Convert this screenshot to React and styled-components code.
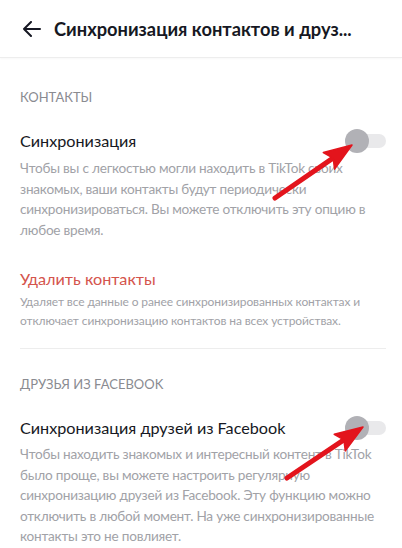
import React from 'react';
import styled, { createGlobalStyle } from 'styled-components';

const GlobalStyle = createGlobalStyle`
  html, body {
    margin: 0;
    padding: 0;
    background: #ffffff;
  }
  body {
    font-family: Lato, "Liberation Sans", sans-serif;
    -webkit-font-smoothing: antialiased;
  }
`;

const Page = styled.div`
  position: relative;
  width: 402px;
  height: 548px;
  overflow: hidden;
  background: #fff;
`;

const Header = styled.header`
  height: 57px;
  display: flex;
  align-items: center;
  padding-left: 22px;
  border-bottom: 1px solid #ededed;
  box-shadow: 0 1px 2px rgba(0, 0, 0, 0.03);
`;

const BackButton = styled.button`
  border: none;
  background: none;
  padding: 0;
  display: flex;
  align-items: center;
  cursor: pointer;
`;

const Title = styled.h1`
  margin: 0 0 0 13px;
  font-size: 18.3px;
  font-weight: 700;
  color: #161823;
  white-space: nowrap;
`;

const Section = styled.section`
  padding: ${p => p.top}px 16px 0 20px;
`;

const SectionLabel = styled.div`
  font-size: 13px;
  line-height: 16px;
  color: #8a8b91;
  text-transform: uppercase;
`;

const Row = styled.div`
  display: flex;
  align-items: center;
  justify-content: space-between;
  margin-top: ${p => p.gap}px;
`;

const ItemTitle = styled.div`
  font-size: 16.2px;
  line-height: 24px;
  color: ${p => (p.danger ? '#d4544c' : '#161823')};
`;

const Description = styled.p`
  margin: ${p => p.gap}px 0 0;
  font-size: ${p => (p.small ? '12px' : '13.6px')};
  line-height: ${p => (p.small ? '19px' : '20.5px')};
  letter-spacing: ${p => (p.small ? '-0.1px' : '-0.22px')};
  color: #a1a2a7;
`;

const Divider = styled.hr`
  border: none;
  border-top: 1px solid #ededed;
  margin: 18px 0 0;
`;

const Track = styled.div`
  position: relative;
  width: 41px;
  height: 24px;
  flex-shrink: 0;

  &::before {
    content: '';
    position: absolute;
    left: 3px;
    right: 0;
    top: 5px;
    height: 14px;
    border-radius: 7px;
    background: #e9e9eb;
  }
`;

const Knob = styled.div`
  position: absolute;
  left: 0;
  top: 0;
  width: 24px;
  height: 24px;
  border-radius: 50%;
  background: #b1b1b6;
`;

const Marker = styled.svg`
  position: absolute;
  left: ${p => p.x}px;
  top: ${p => p.y}px;
  overflow: visible;
  pointer-events: none;
`;

const BackIcon = () => (
  <svg width="19" height="16" viewBox="0 0 19 16" fill="none">
    <path d="M18 8H2M9 1L2 8l7 7" stroke="#161823" strokeWidth="2" strokeLinecap="round" strokeLinejoin="round" />
  </svg>
);

const Toggle = () => (
  <Track>
    <Knob />
  </Track>
);

// red pointer drawn from tail (tx, ty) to tip (hx, hy), page coordinates
const Arrow = ({ tx, ty, hx, hy }) => {
  const dx = hx - tx;
  const dy = hy - ty;
  const len = Math.hypot(dx, dy);
  const ux = dx / len;
  const uy = dy / len;
  const head = 28;
  const half = 10;
  const bx = hx - ux * head;
  const by = hy - uy * head;
  const px = -uy;
  const py = ux;
  const x0 = Math.min(tx, hx) - 12;
  const y0 = Math.min(ty, hy) - 12;
  const pt = (x, y) => `${(x - x0).toFixed(1)},${(y - y0).toFixed(1)}`;
  return (
    <Marker x={x0} y={y0} width={Math.abs(dx) + 24} height={Math.abs(dy) + 24}>
      <line x1={tx - x0} y1={ty - y0} x2={bx + ux * 4 - x0} y2={by + uy * 4 - y0} stroke="#e3141c" strokeWidth="5" strokeLinecap="round" />
      <polygon
        points={`${pt(hx, hy)} ${pt(bx + px * half, by + py * half)} ${pt(bx + ux * 5, by + uy * 5)} ${pt(bx - px * half, by - py * half)}`}
        fill="#e3141c"
        stroke="#e3141c"
        strokeWidth="1.5"
        strokeLinejoin="round"
      />
    </Marker>
  );
};

const App = () => (
  <Page>
    <GlobalStyle />
    <Header>
      <BackButton aria-label="Назад">
        <BackIcon />
      </BackButton>
      <Title>Синхронизация контактов и друз...</Title>
    </Header>

    <Section top={31}>
      <SectionLabel>Контакты</SectionLabel>
      <Row gap={24}>
        <ItemTitle>Синхронизация</ItemTitle>
        <Toggle />
      </Row>
      <Description gap={5}>
        Чтобы вы с легкостью могли находить в TikTok своих знакомых, ваши контакты будут периодически
        синхронизироваться. Вы можете отключить эту опцию в любое время.
      </Description>
      <Row gap={27}>
        <ItemTitle danger>Удалить контакты</ItemTitle>
      </Row>
      <Description gap={1} small>
        Удаляет все данные о ранее синхронизированных контактах и отключает синхронизацию контактов на всех
        устройствах.
      </Description>
      <Divider />
    </Section>

    <Section top={27}>
      <SectionLabel>Друзья из Facebook</SectionLabel>
      <Row gap={24}>
        <ItemTitle>Синхронизация друзей из Facebook</ItemTitle>
        <Toggle />
      </Row>
      <Description gap={4}>
        Чтобы находить знакомых и интересный контент в TikTok было проще, вы можете настроить регулярную
        синхронизацию друзей из Facebook. Эту функцию можно отключить в любой момент. На уже
        синхронизированные контакты это не повлияет.
      </Description>
    </Section>

    <Arrow tx={275} ty={198} hx={352} hy={145} />
    <Arrow tx={287} ty={478} hx={363} hy={427} />
  </Page>
);

export default App;
